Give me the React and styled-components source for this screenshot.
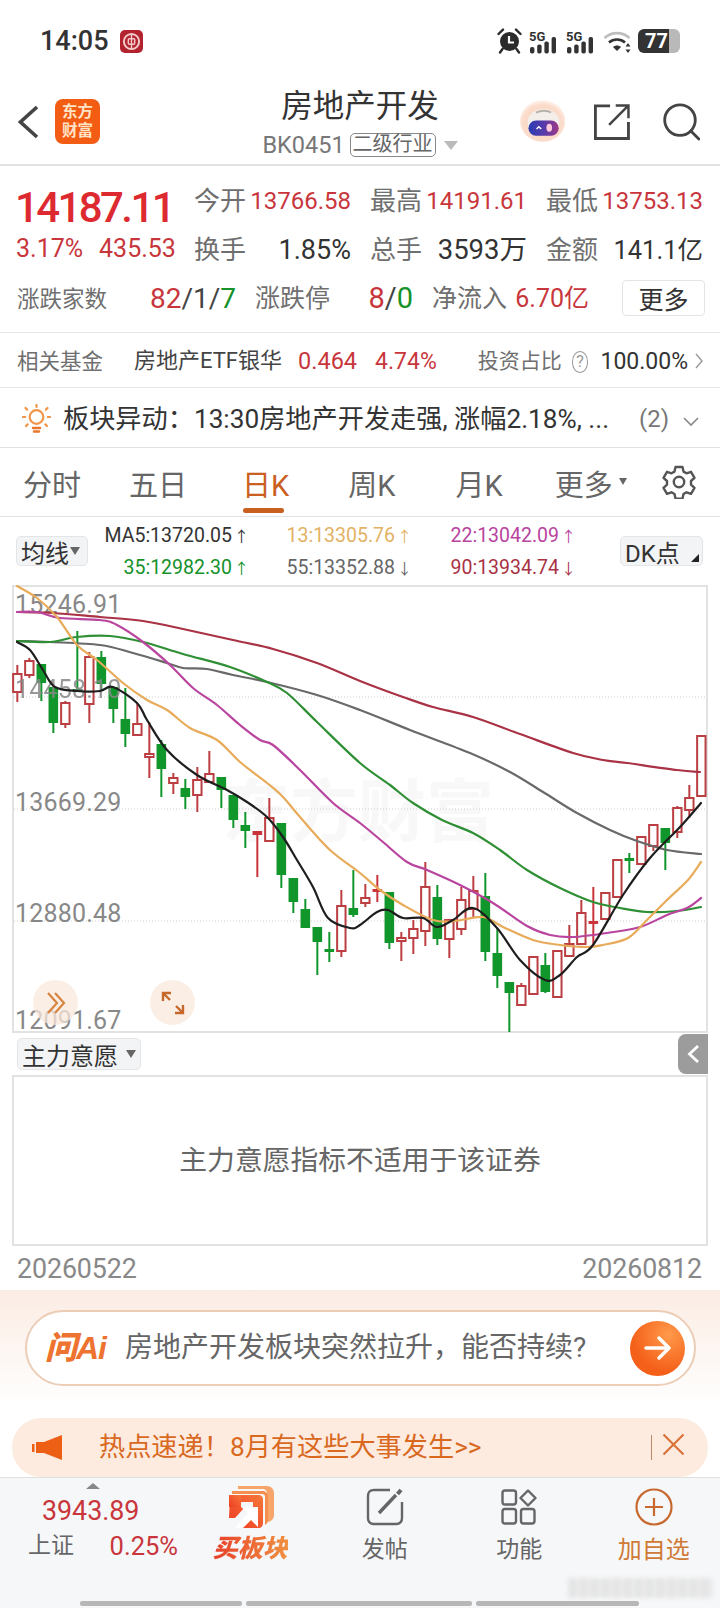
import React from 'react';
import styled, { createGlobalStyle } from 'styled-components';

const FONT = `Roboto, "Noto Sans CJK SC", sans-serif`;
const RED = '#c8363c';
const GREEN = '#15922a';
const LABEL = '#6f6f6f';
const DARK = '#333';

const Global = createGlobalStyle`
  html, body { margin: 0; padding: 0; background: #fff; }
  body { font-family: ${FONT}; }
  * { box-sizing: border-box; }
`;

const Page = styled.div`
  width: 720px; height: 1608px; position: relative; overflow: hidden;
  display: flex; flex-direction: column; background: #fff; color: ${DARK};
  font-family: ${FONT};
`;
const Txt = styled.span`
  font-size: ${p => p.$s || 24}px; color: ${p => p.$c || DARK}; white-space: nowrap;
  font-weight: ${p => p.$w || 400}; line-height: 1.1;
  letter-spacing: ${p => p.$ls || 0}px; margin-left: ${p => p.$ml || 0}px;
`;
const PushRight = styled.span`margin-left: auto; font-size: 24px; color: #777; line-height: 1.1;`;

/* status */
const StatusBar = styled.div`
  height: 84px; flex: none; display: flex; align-items: center; padding: 0 40px 2px 40px;
`;
const Time = styled.span`font-size: 27px; font-weight: 500; color: #333; margin-right: 11px;`;
const StatusRight = styled.div`margin-left: auto; display: flex; align-items: center; gap: 7px;`;
const Battery = styled.div`
  width: 42px; height: 24px; border-radius: 6px; background: linear-gradient(90deg,#333 0 74%,#b9b9b9 74% 100%);
  color: #fff; font: 700 20px ${FONT}; display: flex; align-items: center; padding-left: 7px;
`;

/* header */
const Header = styled.div`
  height: 82px; flex: none; border-bottom: 2px solid #e2e2e2;
  display: grid; grid-template-columns: 200px 1fr 200px; align-items: center;
`;
const HeaderLeft = styled.div`display: flex; align-items: center; padding: 0 0 5px 18px; gap: 16px;`;
const Logo = styled.div`
  width: 45px; height: 45px; border-radius: 8px; background: #f25c13; color: #ffe3c6;
  font: 700 15.5px/19px ${FONT}; text-align: center; padding-top: 4px;
`;
const TitleBlock = styled.div`display: flex; flex-direction: column; align-items: center; gap: 7px; padding-bottom: 3px;`;
const Title = styled.div`font-size: 31.5px; line-height: 38px; color: #333;`;
const SubRow = styled.div`display: flex; align-items: center; color: #777; font-size: 23.5px; line-height: 25px;`;
const Tag = styled.span`
  border: 1.5px solid #888; border-radius: 5px; font-size: 20px; height: 24px; line-height: 21px;
  padding: 0 2px; margin-left: 5px; color: #666;
`;
const DownTri = styled.i`
  width: 0; height: 0; border-left: 7px solid transparent; border-right: 7px solid transparent;
  border-top: 9px solid #bbb; margin-left: 8px;
`;
const HeaderRight = styled.div`display: flex; align-items: center; justify-content: flex-end; padding: 0 20px 5px 0; gap: 28px;`;

/* quote */
const Quote = styled.div`height: 167px; flex: none; border-bottom: 1.5px solid #e6e6e6; padding: 11px 15px 0 17px; display: flex; flex-direction: column;`;
const QuoteTop = styled.div`display: flex;`;
const BigCol = styled.div`width: 177px; flex: none; display: flex; flex-direction: column;`;
const BigNum = styled.div`font-size: 42px; font-weight: 500; color: #dd2a30; letter-spacing: -2.6px; line-height: 50px; margin: 6px 0 0 -2px; height: 51px;`;
const SmallRow = styled.div`display: flex; gap: 16px; font-size: 25px; color: ${RED}; line-height: 30px; margin-left: -1px;`;
const MetricGrid = styled.div`flex: 1; display: grid; grid-template-columns: repeat(3, 157px); column-gap: 19px; grid-auto-rows: 49px;`;
const Metric = styled.div`display: flex; align-items: center; justify-content: space-between;`;
const Row3 = styled.div`display: flex; align-items: center; height: 36px; margin-top: 5px;`;
const Seg = styled.div`
  display: flex; align-items: center; justify-content: space-between;
  width: ${p => p.$w}px; margin-left: ${p => p.$ml || 0}px; padding-top: 2px;
`;
const Slash = styled.span`color: #444;`;
const MoreBtn = styled.div`
  margin-left: auto; width: 83px; height: 36px; border: 1.5px solid #e4e4e4; border-radius: 4px;
  display: flex; align-items: center; justify-content: center; font-size: 25px; color: #333;
`;

/* fund */
const FundRow = styled.div`height: 55px; flex: none; border-bottom: 1.5px solid #e6e6e6; display: flex; align-items: center; padding: 3px 17px 0;`;
const HelpDot = styled.span`
  width: 22px; height: 22px; border-radius: 50%; border: 1.5px solid #999; color: #999; font-size: 16px;
  display: inline-flex; align-items: center; justify-content: center; margin-left: 10px;
`;

/* alert */
const AlertRow = styled.div`height: 60px; flex: none; border-bottom: 1.5px solid #e2e2e2; display: flex; align-items: center; padding: 3px 21px 0 22px;`;

/* tabs */
const Tabs = styled.div`height: 69px; flex: none; border-bottom: 1.5px solid #e2e2e2; display: flex; align-items: center; padding-left: 23px; padding-bottom: 1px;`;
const Tab = styled.div`
  position: relative; font-size: 29px; line-height: 36px; margin-top: 8px;
  color: ${p => (p.$active ? '#c9601f' : '#666')};
  margin-left: ${p => p.$ml || 0}px;
  &::after {
    content: ''; display: ${p => (p.$active ? 'block' : 'none')};
    position: absolute; left: 1px; right: 5px; bottom: -9px; height: 5px; border-radius: 3px; background: #c9601f;
  }
`;
const TabCaret = styled.i`
  width: 0; height: 0; border-left: 4.5px solid transparent; border-right: 4.5px solid transparent;
  border-top: 7px solid #666; margin: 0 35px 0 6px;
`;

/* MA */
const MaBar = styled.div`height: 68px; flex: none; position: relative; padding: 0 17px 0 16px; display: flex; align-items: center;`;
const SelectBtn = styled.div`
  height: ${p => p.$h || 30}px; width: ${p => p.$w}px; background: #f3f4f6; border: 1.5px solid #e4e5e8; border-radius: 5px;
  display: flex; align-items: center; padding: 0 4px; font-size: ${p => p.$s || 24}px; color: #333; position: relative; flex: none;
  white-space: nowrap;
`;
const Caret = styled.i`
  width: 0; height: 0; border-left: 5px solid transparent; border-right: 5px solid transparent;
  border-top: 8px solid #666; margin-left: ${p => p.$ml || 2}px; flex: none;
`;
const Corner = styled.i`
  position: absolute; right: 3px; bottom: 3px; width: 0; height: 0;
  border-left: 8px solid transparent; border-bottom: 8px solid #222;
`;
const MaGrid = styled.div`
  flex: 1; display: grid; grid-template-columns: 160px 163px 164px; justify-content: start;
  row-gap: 9px; padding: 3px 0 0 1px; justify-items: end;
`;
const MaVal = styled.span`font-size: 19.5px; line-height: 22px; color: ${p => p.$c}; white-space: nowrap;`;
const MaArrow = styled.span`font-size: 15px; margin-left: 2px;`;

/* chart */
const ChartFrame = styled.div`
  flex: none; margin-left: 12px; width: 696px; height: 448px; position: relative;
  border: 2px solid #e2e2e2;
`;
const ChartSvg = styled.svg`display: block; overflow: visible;`;
const RoundBtn = styled.div`
  position: absolute; top: ${1002 - 22 - 587}px; left: ${p => p.$x - 22 - 14}px; width: 45px; height: 45px;
  border-radius: 50%; background: rgba(250, 232, 220, 0.75);
  display: flex; align-items: center; justify-content: center;
`;

/* indicator */
const IndicatorBar = styled.div`height: 42px; flex: none; position: relative; padding: 5px 0 0 17px;`;
const SideTab = styled.div`
  position: absolute; right: 12px; top: 1px; width: 30px; height: 40px; background: #9c9c9c;
  border-radius: 8px 0 0 8px; display: flex; align-items: center; justify-content: center;
`;
const Panel = styled.div`
  flex: none; height: 171px; margin-left: 12px; width: 696px; border: 2px solid #e2e2e2; padding-bottom: 6px;
  display: flex; align-items: center; justify-content: center; font-size: 27.8px; color: #666;
`;
const DateRow = styled.div`
  height: 44px; flex: none; display: flex; align-items: center; justify-content: space-between;
  padding: 2px 18px 0 17px; color: #888; font-size: 26.8px; letter-spacing: -0.1px;
`;

/* promo */
const Promo = styled.div`
  height: 187px; flex: none; padding-top: 20px;
  background: linear-gradient(180deg, #fbece3 0, #fff 62%);
`;
const Pill = styled.div`
  height: 76px; margin: 0 24px 0 25px; background: #fff; border: 2px solid #eccdb6; border-radius: 38px;
  display: flex; align-items: center; padding: 0 9px 0 18px;
`;
const AiLogo = styled.span`
  font: italic 900 32px/1 "Liberation Sans", "Noto Sans CJK SC", sans-serif; color: #ee7330; letter-spacing: -1px; width: 80px; flex: none;
`;
const GoBtn = styled.div`
  margin-left: auto; width: 55px; height: 55px; border-radius: 50%;
  background: radial-gradient(circle at 70% 25%, #ff9a4a, #f4601a 65%);
  display: flex; align-items: center; justify-content: center;
`;
const Banner = styled.div`
  height: 59px; margin: 32px 12px 0 12px; border-radius: 29px; background: #fdebe0;
  display: flex; align-items: center; padding: 0 23px 0 20px;
`;
const BannerDivider = styled.i`width: 1.5px; height: 25px; background: #b98b6e; margin-left: auto;`;

/* nav */
const Nav = styled.div`
  flex: 1; background: #f6f7f9; border-top: 1.5px solid #e0e0e0;
  display: grid; grid-template-columns: 183px repeat(4, 134.5px); align-items: start;
`;
const IndexCell = styled.div`display: flex; flex-direction: column; padding: 5px 0 0 28px; position: relative;`;
const UpTri = styled.i`
  width: 0; height: 0; border-left: 7px solid transparent; border-right: 7px solid transparent;
  border-bottom: 6px solid #888; margin-left: 58px;
`;
const IndexVal = styled.span`font-size: 26.8px; color: ${RED}; line-height: 32px; margin: 6px 0 0 14px;`;
const IndexRow = styled.div`display: flex; justify-content: space-between; width: 150px; align-items: center; margin-top: 5px; line-height: 32px;`;
const NavItem = styled.div`display: flex; flex-direction: column; align-items: center; padding-top: 8px;`;
const NavIcon = styled.div`height: 42px; display: flex; align-items: center; justify-content: center;`;
const NavLabel = styled.span`font-size: ${p => p.$s || 23}px; color: ${p => p.$c || '#666'}; line-height: 30px; margin-top: 7px; white-space: nowrap;`;
const BuyLabel = styled.span`
  font: italic 900 25px/30px "Noto Sans CJK SC", sans-serif; margin-top: 3px; white-space: nowrap;
  background: linear-gradient(90deg, #e8402a, #f09040); -webkit-background-clip: text; background-clip: text; color: transparent;
`;
const HomeBar = styled.div`position: absolute; left: 80px; bottom: 2px; display: flex; gap: 4px;`;
const HomeSeg = styled.i`display: block; width: ${p => p.$w}px; height: 5px; background: #b7b7b7; border-radius: 2px;`;
const Stamp = styled.div`
  position: absolute; left: 568px; bottom: 10px; width: 145px; height: 20px; filter: blur(2px); opacity: .65;
  background: repeating-linear-gradient(90deg, #dcdcdc 0 9px, #eee 9px 11px);
`;

/* ---------- chart data ---------- */
// [high, bodyTop, bodyBottom, low, colour] ; r = hollow red, f = filled red, g = green
const CANDLES = [
  [665,674,692,702,'r'],[658,661,675,678,'r'],[664,664,683,701,'g'],[687,687,723,733,'g'],[701,703,724,728,'r'],
  [631,689,691,691,'g'],[652,657,704,723,'r'],[651,657,684,690,'g'],[687,687,709,723,'g'],[688,719,734,747,'g'],
  [703,724,735,736,'r'],[722,754,757,778,'r'],[740,744,769,797,'g'],[773,778,783,794,'r'],[779,788,797,809,'g'],
  [767,780,795,812,'r'],[751,774,782,783,'r'],[777,777,790,808,'g'],[795,795,820,828,'g'],[812,825,831,848,'g'],
  [831,831,835,877,'f'],[798,818,841,841,'r'],[823,823,875,888,'g'],[878,878,902,913,'g'],[899,909,928,928,'g'],
  [927,927,942,975,'g'],[932,949,952,962,'g'],[890,906,951,957,'r'],[870,908,915,917,'g'],[884,898,903,907,'r'],
  [875,889,891,902,'f'],[892,892,943,949,'g'],[932,938,941,961,'r'],[920,929,938,954,'r'],[862,887,931,946,'r'],
  [885,897,939,945,'g'],[919,920,939,958,'r'],[887,900,929,935,'r'],[876,891,909,917,'r'],[873,896,952,961,'g'],
  [928,953,976,988,'g'],[982,982,993,1032,'g'],[983,986,1005,1005,'r'],[957,957,994,995,'r'],[953,965,992,993,'g'],
  [951,951,997,997,'r'],[925,944,956,956,'r'],[900,913,944,944,'r'],[887,921,923,945,'f'],[892,893,919,919,'r'],
  [860,860,897,897,'r'],[853,858,859,873,'g'],[837,837,864,864,'r'],[825,825,846,851,'r'],[828,828,843,870,'g'],
  [806,808,832,838,'r'],[785,798,810,818,'r'],[736,736,796,796,'r'],
];

const MA90 = [[17,612],[53,613],[100,617],[143,621],[183,629],[233,640],[273,649],[317,663],[360,681],[403,697],[433,707],[473,717],[520,734],[573,753],[603,760],[627,763],[677,770],[700,772]];
const MA55 = [[17,641],[50,642],[100,645],[133,653],[167,663],[183,668],[207,669],[233,675],[267,682],[317,695],[360,710],[410,730],[470,753],[510,772],[543,792],[577,813],[610,830],[637,841],[667,850],[701,854]];
const MA35 = [[17,641],[50,642],[77,637],[110,636],[143,642],[183,654],[230,667],[267,682],[287,693],[317,722],[360,763],[390,785],[413,803],[442,820],[473,833],[500,850],[527,870],[560,888],[593,902],[620,908],[647,912],[677,911],[701,907]];
const MA22 = [[17,612],[37,612],[60,618],[100,620],[117,625],[143,642],[170,665],[193,688],[217,705],[240,725],[260,740],[273,745],[300,770],[333,803],[360,823],[383,842],[407,862],[427,870],[460,885],[493,903],[527,926],[550,935],[573,937],[607,933],[640,927],[667,915],[687,908],[701,898]];
const MA13 = [[17,586],[37,598],[57,617],[77,645],[97,660],[123,683],[147,700],[167,710],[190,728],[217,740],[240,762],[267,783],[283,797],[300,817],[330,850],[360,873],[380,890],[403,905],[433,920],[455,921],[483,917],[503,927],[533,940],[560,945],[587,947],[603,945],[628,938],[647,920],[667,900],[688,880],[701,862]];
const MA5 = [[17,642],[30,650],[43,670],[55,687],[77,691],[100,691],[113,687],[137,703],[147,720],[167,750],[197,775],[227,790],[247,802],[267,817],[283,837],[297,860],[313,887],[328,918],[350,928],[360,925],[377,912],[388,910],[403,918],[423,918],[437,927],[453,920],[473,908],[497,928],[520,960],[545,980],[560,975],[577,957],[593,945],[623,895],[650,858],[680,827],[701,803]];

function smooth(pts) {
  let d = `M${pts[0][0]} ${pts[0][1]}`;
  for (let i = 0; i < pts.length - 1; i++) {
    const p0 = pts[i - 1] || pts[i], p1 = pts[i], p2 = pts[i + 1], p3 = pts[i + 2] || p2;
    const c1x = p1[0] + (p2[0] - p0[0]) / 6, c1y = p1[1] + (p2[1] - p0[1]) / 6;
    const c2x = p2[0] - (p3[0] - p1[0]) / 6, c2y = p2[1] - (p3[1] - p1[1]) / 6;
    d += ` C${c1x.toFixed(1)} ${c1y.toFixed(1)} ${c2x.toFixed(1)} ${c2y.toFixed(1)} ${p2[0]} ${p2[1]}`;
  }
  return d;
}

const Candle = ({ i, d }) => {
  const x = 17.33 + 12 * i;
  const [hi, top, bot, lo, k] = d;
  const col = k === 'g' ? '#10962a' : k === 'f' ? '#c9343a' : '#bb3e42';
  return (
    <g>
      <line x1={x} x2={x} y1={hi} y2={lo} stroke={col} strokeWidth="2" />
      {k === 'r'
        ? <rect x={x - 4.2} y={top} width="8.4" height={Math.max(bot - top, 2)} fill="#fff" stroke={col} strokeWidth="2" />
        : <rect x={x - 4.8} y={top} width="9.6" height={Math.max(bot - top, 3)} fill={col} />}
    </g>
  );
};

const ChartArt = () => (
  <ChartSvg width="692" height="444" viewBox="14 587 692 444">
    <text x="222" y="836" fontSize="68" fontWeight="700" fill="#f8f8f8" fontFamily={FONT}>东方财富</text>
    {[697, 809, 921].map(y => <line key={y} x1="14" x2="706" y1={y} y2={y} stroke="#cfcfcf" strokeWidth="1" strokeDasharray="1 2" />)}
    {CANDLES.map((d, i) => <Candle key={i} i={i} d={d} />)}
    <g fontFamily={FONT} fontSize="25" fill="#888" letterSpacing="0.2">
      <text x="15" y="613">15246.91</text>
      <text x="15" y="698" opacity=".85">14458.10</text>
      <text x="15" y="811">13669.29</text>
      <text x="15" y="922">12880.48</text>
      <text x="15" y="1029">12091.67</text>
    </g>
    <g fill="none" strokeWidth="2.2" strokeLinecap="round" strokeLinejoin="round">
      <path d={smooth(MA90)} stroke="#a93245" />
      <path d={smooth(MA55)} stroke="#696969" />
      <path d={smooth(MA35)} stroke="#2f8f34" />
      <path d={smooth(MA22)} stroke="#b9459f" />
      <path d={smooth(MA13)} stroke="#e7ab5a" />
      <path d={smooth(MA5)} stroke="#1e1e1e" />
    </g>
  </ChartSvg>
);

/* ---------- icons ---------- */
const BankIcon = () => (
  <svg width="23" height="23" viewBox="0 0 23 23">
    <rect width="23" height="23" rx="5" fill="#b2222f" />
    <circle cx="11.5" cy="11.5" r="7.6" fill="none" stroke="#f3c9c9" strokeWidth="2" />
    <rect x="8.3" y="8.8" width="6.4" height="5.4" rx="1" fill="none" stroke="#f3c9c9" strokeWidth="1.5" />
    <path d="M11.5 3.5v16" stroke="#f3c9c9" strokeWidth="1.4" />
  </svg>
);
const AlarmIcon = () => (
  <svg width="25" height="26" viewBox="0 0 25 26">
    <circle cx="12.5" cy="13.5" r="9.5" fill="#2b2b2b" />
    <path d="M12 8v6.5h5" fill="none" stroke="#fff" strokeWidth="2.2" />
    <path d="M1.5 6 6 1.6M23.5 6 19 1.6M5.5 21l-2.5 3.5M19.5 21l2.5 3.5" stroke="#2b2b2b" strokeWidth="2.4" strokeLinecap="round" />
  </svg>
);
const SignalSvg = styled.svg`overflow: visible;`;
const SignalIcon = () => (
  <SignalSvg width="30" height="26" viewBox="0 0 30 26">
    <text x="0" y="12.5" fontSize="13" fontWeight="700" fill="#333" fontFamily={FONT}>5G</text>
    <rect x="1" y="19" width="4.4" height="6.5" rx="1.8" fill="#333" />
    <rect x="8.2" y="16.5" width="4.4" height="9" rx="1.8" fill="#333" />
    <rect x="15.4" y="13.5" width="4.4" height="12" rx="1.8" fill="#333" />
    <rect x="22.6" y="9" width="4.4" height="16.5" rx="1.8" fill="#333" />
  </SignalSvg>
);
const WifiIcon = () => (
  <svg width="28" height="25" viewBox="0 0 28 25">
    <path d="M1.5 9C8.5 2.5 19.5 2.5 26.5 9" fill="none" stroke="#bdbdbd" strokeWidth="2.6" />
    <path d="M6 13.5c4.5-4 11.5-4 16 0" fill="none" stroke="#333" strokeWidth="2.6" />
    <path d="M10 18c2.4-2 5.6-2 8 0l-4 4z" fill="#333" />
    <path d="M25 14l2.5 3.5h-5zM25 24l2.5-3.5h-5z" fill="#333" />
  </svg>
);
const Chevron = ({ w = 21, h = 34, s = '#444', sw = 3.6 }) => (
  <svg width={w} height={h} viewBox={`0 0 ${w} ${h}`}>
    <path d={`M${w - 2} 2 L2.5 ${h / 2} L${w - 2} ${h - 2}`} fill="none" stroke={s} strokeWidth={sw} />
  </svg>
);
const RobotSvg = styled.svg`margin-right: 1px;`;
const RobotIcon = () => (
  <RobotSvg width="48" height="46" viewBox="0 0 48 46">
    <defs>
      <radialGradient id="halo" cx=".5" cy=".55" r=".55">
        <stop offset="0" stopColor="#f7cdb3" /><stop offset=".8" stopColor="#fbdccb" /><stop offset="1" stopColor="#fff3ec" />
      </radialGradient>
      <linearGradient id="visor" x1="0" x2="1"><stop offset="0" stopColor="#2b3cb4" /><stop offset=".55" stopColor="#5a3aa8" /><stop offset="1" stopColor="#a03a88" /></linearGradient>
    </defs>
    <ellipse cx="24" cy="22" rx="24" ry="22" fill="url(#halo)" />
    <ellipse cx="25" cy="23" rx="17" ry="14" fill="#f3eeea" />
    <path d="M17 13c5-2.5 12-2.5 16 0" fill="none" stroke="#b9b1a8" strokeWidth="2" />
    <rect x="9" y="21.5" width="32" height="16" rx="8" fill="url(#visor)" />
    <path d="M17.5 30.5l2.5-2.5 2.5 2.5" fill="none" stroke="#fff" strokeWidth="1.5" />
    <ellipse cx="31" cy="29" rx="3" ry="4.2" fill="#ffc9da" />
  </RobotSvg>
);
const ShareIcon = () => (
  <svg width="38" height="38" viewBox="0 0 38 38" fill="none" stroke="#444" strokeWidth="3">
    <path d="M17 2H1.5v34.5h35V19" />
    <path d="M16 22 36 2M23 1.5h13.5V15" strokeWidth="2.6" />
  </svg>
);
const SearchSvg = styled.svg`margin-left: 5px;`;
const SearchIcon = () => (
  <SearchSvg width="39" height="39" viewBox="0 0 39 39" fill="none" stroke="#444" strokeWidth="3">
    <circle cx="18" cy="18" r="16.2" />
    <path d="M29.5 29.5 38 38" strokeLinecap="round" />
  </SearchSvg>
);
const SunIcon = () => (
  <svg width="29" height="31" viewBox="0 0 29 31" fill="none" stroke="#f0954a" strokeWidth="2.2" strokeLinecap="round">
    <circle cx="14.5" cy="13" r="6.8" />
    <path d="M14.5 1v2M3.5 4l1.6 1.6M25.5 4l-1.6 1.6M.8 13h2.4M25.8 13h2.4M4 22l1.6-1.6M25 22l-1.6-1.6" />
    <path d="M11 24h7M12 27.5h5" stroke="#e9772c" strokeWidth="2.4" />
  </svg>
);
const SmallChevronDown = () => (
  <svg width="16" height="10" viewBox="0 0 16 10"><path d="M1 1l7 7 7-7" fill="none" stroke="#888" strokeWidth="1.6" /></svg>
);
const SmallChevronRight = () => (
  <svg width="8" height="16" viewBox="0 0 8 16"><path d="M1 1l6 7-6 7" fill="none" stroke="#999" strokeWidth="1.4" /></svg>
);
const GearIcon = () => (
  <svg width="34" height="34" viewBox="0 0 34 34" fill="none" stroke="#555" strokeWidth="2.4" strokeLinejoin="round">
    <path d="M13.5 2h7l1 4.6 3 1.7 4.5-1.5 3.5 6-3.5 3.2v3.6l3.5 3.2-3.5 6-4.5-1.5-3 1.7-1 4.6h-7l-1-4.6-3-1.7-4.5 1.5-3.5-6 3.5-3.2v-3.6l-3.5-3.2 3.5-6 4.5 1.5 3-1.7z" />
    <circle cx="17" cy="17" r="5.2" />
  </svg>
);
const DoubleArrow = () => (
  <svg width="20" height="22" viewBox="0 0 20 22" fill="none" stroke="#d6843f" strokeWidth="2.2">
    <path d="M2 1l9 10-9 10M9 1l9 10-9 10" />
  </svg>
);
const ExpandIcon = () => (
  <svg width="24" height="24" viewBox="0 0 24 24" fill="none" stroke="#c7682b" strokeWidth="2.4">
    <path d="M2 10V2h8M2 2l7 7M22 14v8h-8M22 22l-7-7" />
  </svg>
);
const ArrowRight = () => (
  <svg width="28" height="24" viewBox="0 0 28 24" fill="none" stroke="#fff" strokeWidth="3.4" strokeLinecap="round" strokeLinejoin="round">
    <path d="M2 12h23M15 2l10 10-10 10" />
  </svg>
);
const MegaIcon = () => (
  <svg width="30" height="25" viewBox="0 0 30 25">
    <rect x="0" y="9" width="2.5" height="8" fill="#ee5f16" />
    <path d="M4 7h8L30 0v25L12 18H4z" fill="#ee5f16" />
  </svg>
);
const CloseX = () => (
  <svg width="23" height="23" viewBox="0 0 23 23"><path d="M1.5 1.5l20 20M21.5 1.5l-20 20" stroke="#d9733a" strokeWidth="2.2" /></svg>
);
const BuyIcon = () => (
  <svg width="47" height="44" viewBox="0 0 47 44">
    <defs>
      <linearGradient id="bk" x1="0" y1="1" x2="1" y2="0"><stop offset="0" stopColor="#ee3d22" /><stop offset="1" stopColor="#f6773a" /></linearGradient>
    </defs>
    <path d="M11 1h29c4 0 7 3 7 7v22c0 4-3 7-7 7V8c0-2-2-4-4-4H11z" fill="#f7a56a" />
    <path d="M5 6h31c2 0 5 2 5 5v24c0 2-1 4-3 5V12c0-2-1-3-3-3H5z" fill="#f58f50" />
    <path d="M3 10h29c2 0 4 2 4 4v24c0 3-2 5-4 5H13l10-12h3V17H13v5h5L8 33H2z" fill="url(#bk)" />
    <path d="M2 10h12v12H2z" fill="url(#bk)" />
    <path d="M8 43 21 28l-7-6h17v20l-7-7-8 8z" fill="#fff" />
  </svg>
);
const PostIcon = () => (
  <svg width="38" height="38" viewBox="0 0 38 38" fill="none" stroke="#666" strokeWidth="2.4">
    <path d="M24 2H8C4 2 2 4 2 8v22c0 4 2 6 6 6h22c4 0 6-2 6-6V14" />
    <path d="M13 25 30 7" strokeWidth="3.4" />
    <path d="M31.5 6 35 2" strokeWidth="4" />
  </svg>
);
const FuncIcon = () => (
  <svg width="36" height="36" viewBox="0 0 36 36" fill="none" stroke="#666" strokeWidth="2.4">
    <rect x="1.5" y="1.5" width="13.5" height="14" rx="2.5" />
    <rect x="1.5" y="20" width="13.5" height="14.5" rx="2.5" />
    <rect x="20" y="20" width="13.5" height="14.5" rx="2.5" />
    <path d="M27 1.5 34.5 9 27 16.5 19.5 9z" strokeLinejoin="round" />
  </svg>
);
const AddIcon = () => (
  <svg width="38" height="38" viewBox="0 0 38 38" fill="none" stroke="#c8692f" strokeWidth="2.2">
    <circle cx="19" cy="19" r="17.5" />
    <path d="M19 10v18M10 19h18" />
  </svg>
);

const MA_ROWS = [
  ['MA5:13720.05', '↑', '#333'], ['13:13305.76', '↑', '#e3b264'], ['22:13042.09', '↑', '#b9459f'],
  ['35:12982.30', '↑', GREEN], ['55:13352.88', '↓', '#666'], ['90:13934.74', '↓', '#a93245'],
];

export default function App() {
  return (
    <Page>
      <Global />
      <StatusBar>
        <Time>14:05</Time>
        <BankIcon />
        <StatusRight>
          <AlarmIcon /><SignalIcon /><SignalIcon /><WifiIcon />
          <Battery>77</Battery>
        </StatusRight>
      </StatusBar>

      <Header>
        <HeaderLeft>
          <Chevron />
          <Logo>东方<br />财富</Logo>
        </HeaderLeft>
        <TitleBlock>
          <Title>房地产开发</Title>
          <SubRow>BK0451<Tag>二级行业</Tag><DownTri /></SubRow>
        </TitleBlock>
        <HeaderRight>
          <RobotIcon /><ShareIcon /><SearchIcon />
        </HeaderRight>
      </Header>

      <Quote>
        <QuoteTop>
          <BigCol>
            <BigNum>14187.11</BigNum>
            <SmallRow><span>3.17%</span><span>435.53</span></SmallRow>
          </BigCol>
          <MetricGrid>
            <Metric><Txt $s={26} $c={LABEL}>今开</Txt><Txt $c={RED} $s={24}>13766.58</Txt></Metric>
            <Metric><Txt $s={26} $c={LABEL}>最高</Txt><Txt $c={RED} $s={24}>14191.61</Txt></Metric>
            <Metric><Txt $s={26} $c={LABEL}>最低</Txt><Txt $c={RED} $s={24}>13753.13</Txt></Metric>
            <Metric><Txt $s={26} $c={LABEL}>换手</Txt><Txt $s={27}>1.85%</Txt></Metric>
            <Metric><Txt $s={26} $c={LABEL}>总手</Txt><Txt $s={27.5}>3593万</Txt></Metric>
            <Metric><Txt $s={26} $c={LABEL}>金额</Txt><Txt $s={25.5}>141.1亿</Txt></Metric>
          </MetricGrid>
        </QuoteTop>
        <Row3>
          <Seg $w={219}>
            <Txt $s={22.5} $c={LABEL}>涨跌家数</Txt>
            <Txt $s={28}><Txt $s={28} $c={RED}>82</Txt><Slash>/1/</Slash><Txt $s={28} $c={GREEN}>7</Txt></Txt>
          </Seg>
          <Seg $w={158} $ml={19}>
            <Txt $s={25} $c={LABEL}>涨跌停</Txt>
            <Txt $s={29}><Txt $s={29} $c={RED}>8</Txt><Slash>/</Slash><Txt $s={29} $c={GREEN}>0</Txt></Txt>
          </Seg>
          <Seg $w={157} $ml={19}>
            <Txt $s={25} $c={LABEL}>净流入</Txt>
            <Txt $s={25} $c={RED}>6.70亿</Txt>
          </Seg>
          <MoreBtn>更多</MoreBtn>
        </Row3>
      </Quote>

      <FundRow>
        <Txt $s={21.5} $c={LABEL}>相关基金</Txt>
        <Txt $s={22} $c="#444" $ml={31}>房地产ETF银华</Txt>
        <Txt $s={23.5} $c={RED} $ml={16}>0.464</Txt>
        <Txt $s={23} $c={RED} $ml={18}>4.74%</Txt>
        <Txt $s={21} $c={LABEL} $ml={41}>投资占比</Txt>
        <HelpDot>?</HelpDot>
        <Txt $s={23} $ml={12}>100.00%</Txt>
        <Txt $ml={7}><SmallChevronRight /></Txt>
      </FundRow>

      <AlertRow>
        <SunIcon />
        <Txt $s={26.2} $ml={12}>板块异动：13:30房地产开发走强, 涨幅2.18%, ...</Txt>
        <PushRight>(2)</PushRight>
        <Txt $ml={14}><SmallChevronDown /></Txt>
      </AlertRow>

      <Tabs>
        <Tab>分时</Tab>
        <Tab $ml={48}>五日</Tab>
        <Tab $ml={55} $active>日K</Tab>
        <Tab $ml={59}>周K</Tab>
        <Tab $ml={60}>月K</Tab>
        <Tab $ml={52}>更多</Tab>
        <TabCaret />
        <GearIcon />
      </Tabs>

      <MaBar>
        <SelectBtn $w={72}>均线<Caret $ml={1} /></SelectBtn>
        <MaGrid>
          {MA_ROWS.map(([t, a, c]) => <MaVal key={t} $c={c}>{t}<MaArrow>{a}</MaArrow></MaVal>)}
        </MaGrid>
        <SelectBtn $w={83}>DK点<Corner /></SelectBtn>
      </MaBar>

      <ChartFrame>
        <ChartArt />
        <RoundBtn $x={55}><DoubleArrow /></RoundBtn>
        <RoundBtn $x={172}><ExpandIcon /></RoundBtn>
      </ChartFrame>

      <IndicatorBar>
        <SelectBtn $w={124} $h={32} $s={24}>主力意愿<Caret $ml={8} /></SelectBtn>
        <SideTab><Chevron w={13} h={20} s="#fff" sw={2.8} /></SideTab>
      </IndicatorBar>

      <Panel>主力意愿指标不适用于该证券</Panel>

      <DateRow><span>20260522</span><span>20260812</span></DateRow>

      <Promo>
        <Pill>
          <AiLogo>问Ai</AiLogo>
          <Txt $s={28} $c="#666">房地产开发板块突然拉升，能否持续?</Txt>
          <GoBtn><ArrowRight /></GoBtn>
        </Pill>
        <Banner>
          <MegaIcon />
          <Txt $s={26.2} $c="#d9691f" $ml={37}>热点速递！8月有这些大事发生&gt;&gt;</Txt>
          <BannerDivider />
          <Txt $ml={10}><CloseX /></Txt>
        </Banner>
      </Promo>

      <Nav>
        <IndexCell>
          <UpTri />
          <IndexVal>3943.89</IndexVal>
          <IndexRow>
            <Txt $s={23} $c="#666">上证</Txt>
            <Txt $s={25.5} $c={RED}>0.25%</Txt>
          </IndexRow>
        </IndexCell>
        <NavItem><NavIcon><BuyIcon /></NavIcon><BuyLabel>买板块</BuyLabel></NavItem>
        <NavItem><NavIcon><PostIcon /></NavIcon><NavLabel>发帖</NavLabel></NavItem>
        <NavItem><NavIcon><FuncIcon /></NavIcon><NavLabel>功能</NavLabel></NavItem>
        <NavItem><NavIcon><AddIcon /></NavIcon><NavLabel $s={24} $c="#cf7a35">加自选</NavLabel></NavItem>
      </Nav>

      <Stamp />
      <HomeBar>
        <HomeSeg $w={162} /><HomeSeg $w={226} /><HomeSeg $w={163} />
      </HomeBar>
    </Page>
  );
}
